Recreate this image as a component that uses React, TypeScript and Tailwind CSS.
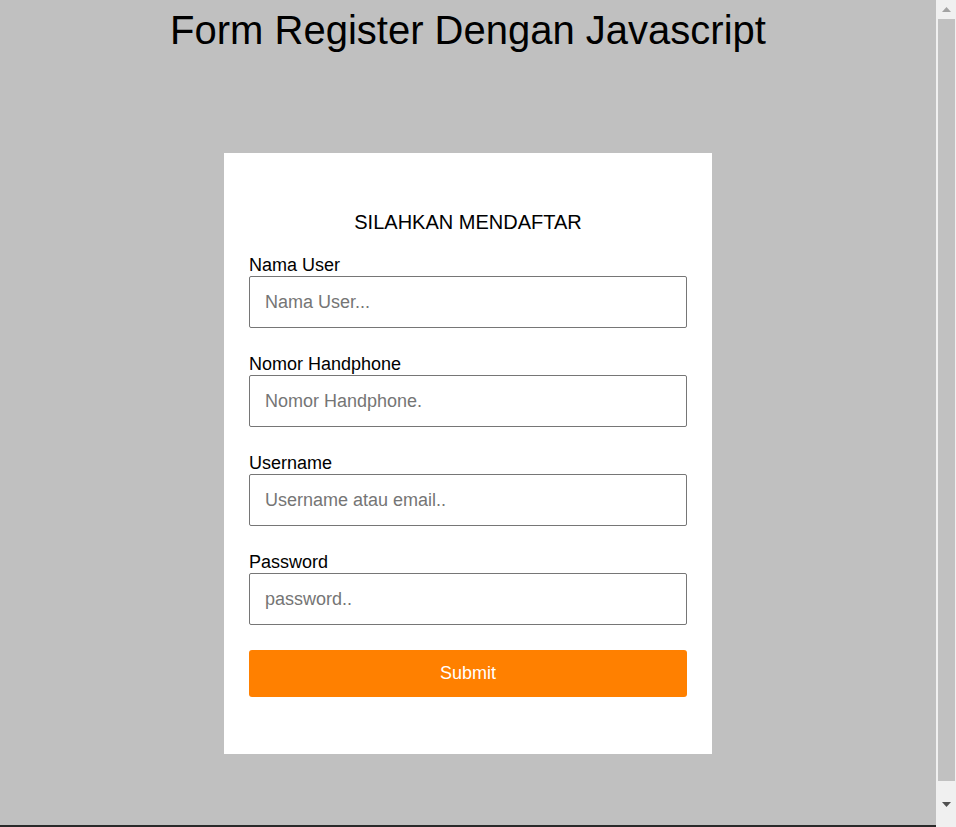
import React from "react";

const fields = [
  { label: "Nama User", placeholder: "Nama User...", type: "text" },
  { label: "Nomor Handphone", placeholder: "Nomor Handphone.", type: "text" },
  { label: "Username", placeholder: "Username atau email..", type: "text" },
  { label: "Password", placeholder: "password..", type: "password" },
];

export default function App() {
  return (
    <div
      className="flex h-[827px] w-[956px] overflow-hidden"
      style={{ fontFamily: '"Liberation Sans", Arial, sans-serif' }}
    >
      <div className="flex flex-1 flex-col items-center bg-[#c0c0c0]">
        <h1 className="pt-[7px] text-[40px] leading-[46px] font-normal text-black">
          Form Register Dengan Javascript
        </h1>
        <div className="mt-[100px] w-[488px] bg-white px-[25px] pt-[58px] pb-[57px]">
          <h2 className="mb-[21px] text-center text-[20px] leading-[23px] text-black">
            SILAHKAN MENDAFTAR
          </h2>
          <form onSubmit={(e) => e.preventDefault()} className="flex flex-col">
            {fields.map((f, i) => (
              <div key={f.label} className={i < 3 ? "mb-[26px]" : ""}>
                <label className="block text-[18px] leading-[21px] text-black">{f.label}</label>
                <input
                  type={f.type}
                  placeholder={f.placeholder}
                  className="block h-[52px] w-full rounded-[2px] border border-[#767676] bg-white px-[15px] text-[18px] text-black outline-none placeholder:text-[#757575]"
                />
              </div>
            ))}
            <button
              type="submit"
              className="mt-[25px] h-[47px] w-full rounded-[3px] bg-[#ff8000] text-[18px] text-white"
            >
              Submit
            </button>
          </form>
        </div>
        <div className="mt-auto h-[2px] w-full bg-[#2a2a2a]" />
      </div>
      <div className="flex w-[20px] flex-col bg-[#f0f0f0] pl-[1px]">
        <div className="flex h-[19px] items-center justify-center">
          <svg width="9" height="5" viewBox="0 0 9 5">
            <polygon points="4.5,0 9,5 0,5" fill="#a3a3a3" />
          </svg>
        </div>
        <div className="mx-[1px] h-[762px] bg-[#c1c1c1]" />
        <div className="flex flex-1 items-center justify-center">
          <svg width="9" height="5" viewBox="0 0 9 5">
            <polygon points="0,0 9,0 4.5,5" fill="#505050" />
          </svg>
        </div>
      </div>
    </div>
  );
}
